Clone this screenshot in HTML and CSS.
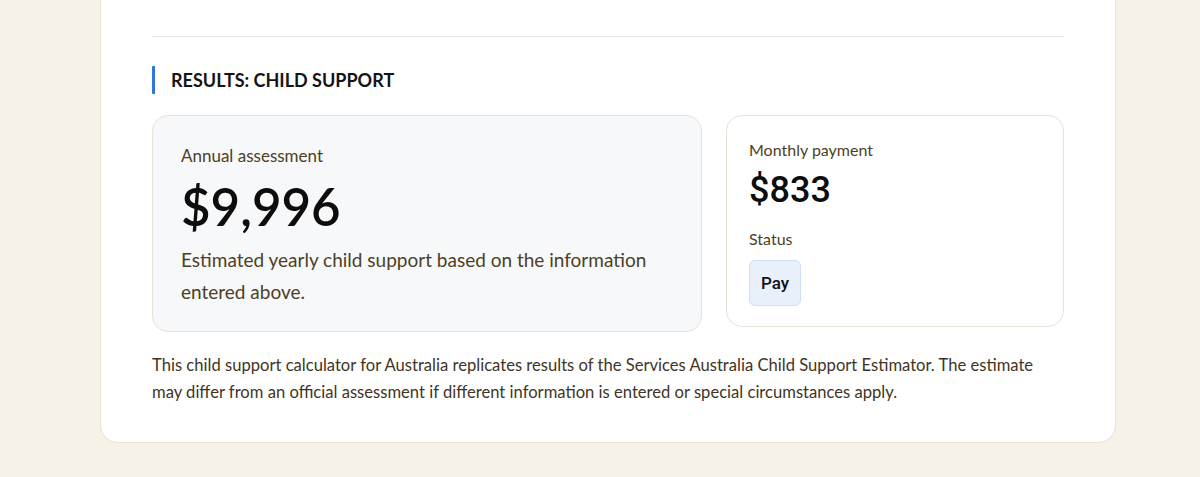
FILE: index.html
```html
<!DOCTYPE html>
<html lang="en">
<head>
<meta charset="utf-8">
<link rel="stylesheet" href="styles.css">
<title>Results</title>
</head>
<body>
<main class="page">
  <section class="card">
    <hr class="rule">
    <h2 class="heading">RESULTS: CHILD SUPPORT</h2>
    <div class="results">
      <div class="box box-main">
        <div class="label">Annual assessment</div>
        <div class="big">$9,996</div>
        <p class="desc">Estimated yearly child support based on the information entered above.</p>
      </div>
      <div class="box box-side">
        <div class="label-sm">Monthly payment</div>
        <div class="mid">$833</div>
        <div class="label-sm status">Status</div>
        <span class="badge">Pay</span>
      </div>
    </div>
    <p class="note">This child support calculator for Australia replicates results of the Services Australia Child Support Estimator. The estimate may differ from an official assessment if different information is entered or special circumstances apply.</p>
  </section>
</main>
</body>
</html>
```
FILE: styles.css
```css
html, body {
  margin: 0;
  padding: 0;
  background: #f6f2e8;
  font-family: Lato, "Open Sans", sans-serif;
}
.page {
  padding: 0 84px 0 100px;
  height: 477px;
  box-sizing: border-box;
}
.card {
  background: #fff;
  border: 1px solid #e9e4d6;
  border-top: none;
  border-radius: 0 0 18px 18px;
  padding: 36px 51px 40px 51px;
  box-sizing: border-box;
  width: 1016px;
  height: 443px;
}
.rule {
  margin: 0;
  border: none;
  border-top: 1px solid #e6e3dc;
}
.heading {
  margin: 29px 0 0 0;
  border-left: 3px solid #2f74e6;
  border-radius: 1px;
  padding: 1px 0 1px 16px;
  font-size: 18px;
  font-weight: 700;
  color: #141414;
  line-height: 26px;
  letter-spacing: 0;
}
.results {
  display: grid;
  grid-template-columns: 550px 338px;
  gap: 24px;
  margin-top: 21px;
  align-items: start;
}
.box {
  border: 1px solid #e6e2d8;
  border-radius: 16px;
  box-sizing: border-box;
}
.box-main {
  background: #f7f8fa;
  height: 217px;
  padding: 29px 28px 0 28px;
}
.box-side {
  background: #fff;
  height: 212px;
  padding: 23px 22px 0 22px;
}
.label {
  font-size: 17px;
  color: #4d3f25;
  line-height: 22px;
}
.big {
  font-size: 51px;
  font-weight: 600;
  color: #0d0d0d;
  line-height: 60px;
  margin-top: 10px;
}
.desc {
  margin: 7px 0 0 0;
  font-size: 19px;
  line-height: 32px;
  color: #4d3f25;
}
.label-sm {
  font-size: 16px;
  color: #4d3f25;
  line-height: 22px;
}
.mid {
  font-family: Roboto, "Liberation Sans", sans-serif;
  font-size: 36px;
  font-weight: 500;
  color: #0d0d0d;
  line-height: 40px;
  margin-top: 9px;
}
.status {
  margin-top: 18px;
}
.badge {
  display: inline-block;
  margin-top: 10px;
  background: #e8f0fc;
  border: 1px solid #cfdff4;
  border-radius: 6px;
  padding: 11px 11px;
  font-family: Roboto, "Liberation Sans", sans-serif;
  font-size: 17px;
  font-weight: 500;
  color: #111;
  line-height: 22px;
}
.note {
  margin: 20px 0 0 0;
  max-width: 895px;
  font-size: 16.6px;
  line-height: 27px;
  color: #3f3526;
}
```
